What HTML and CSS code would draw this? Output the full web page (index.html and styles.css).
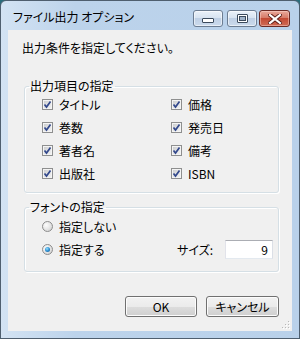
FILE: index.html
```html
<!DOCTYPE html>
<html lang="ja">
<head>
    <meta charset="UTF-8">
    <title>ファイル出力 オプション</title>
    <link rel="stylesheet" href="styles.css">
</head>
<body>
    <div class="window">
        <div class="titlebar">
            <span class="title">ファイル出力 オプション</span>
            <div class="caption-buttons">
                <span class="cap-btn cap-min">
                    <svg width="12" height="6" viewBox="0 0 12 6"><rect x="0.5" y="1.5" width="11" height="4" rx="0.5" fill="#fff" stroke="#3b4a5c"/></svg>
                </span>
                <span class="cap-btn cap-max">
                    <svg width="11" height="9" viewBox="0 0 11 9"><rect x="0.5" y="0.5" width="10" height="8" rx="0.5" fill="#fff" stroke="#3b4a5c"/><rect x="2.5" y="2.5" width="6" height="4" fill="#9fb2c8" stroke="#3b4a5c"/></svg>
                </span>
                <span class="cap-btn cap-close">
                    <svg width="14" height="10" viewBox="0 0 14 10"><path d="M2 1 L12 9 M12 1 L2 9" stroke="#5a1d17" stroke-width="4" stroke-linecap="square"/><path d="M2 1 L12 9 M12 1 L2 9" stroke="#fff" stroke-width="2.2" stroke-linecap="square"/></svg>
                </span>
            </div>
        </div>

        <div class="client">
            <p class="prompt">出力条件を指定してください。</p>

            <!-- 出力項目 -->
            <fieldset class="group group-items">
                <legend>出力項目の指定</legend>
                <div class="check-grid">
                    <div class="check"><span class="box"><svg width="9" height="9" viewBox="0 0 9 9"><path d="M1.5 4.5 L3.5 7 L7.5 1.5" fill="none" stroke="#32488c" stroke-width="1.7"/></svg></span>タイトル</div>
                    <div class="check"><span class="box"><svg width="9" height="9" viewBox="0 0 9 9"><path d="M1.5 4.5 L3.5 7 L7.5 1.5" fill="none" stroke="#32488c" stroke-width="1.7"/></svg></span>価格</div>
                    <div class="check"><span class="box"><svg width="9" height="9" viewBox="0 0 9 9"><path d="M1.5 4.5 L3.5 7 L7.5 1.5" fill="none" stroke="#32488c" stroke-width="1.7"/></svg></span>巻数</div>
                    <div class="check"><span class="box"><svg width="9" height="9" viewBox="0 0 9 9"><path d="M1.5 4.5 L3.5 7 L7.5 1.5" fill="none" stroke="#32488c" stroke-width="1.7"/></svg></span>発売日</div>
                    <div class="check"><span class="box"><svg width="9" height="9" viewBox="0 0 9 9"><path d="M1.5 4.5 L3.5 7 L7.5 1.5" fill="none" stroke="#32488c" stroke-width="1.7"/></svg></span>著者名</div>
                    <div class="check"><span class="box"><svg width="9" height="9" viewBox="0 0 9 9"><path d="M1.5 4.5 L3.5 7 L7.5 1.5" fill="none" stroke="#32488c" stroke-width="1.7"/></svg></span>備考</div>
                    <div class="check"><span class="box"><svg width="9" height="9" viewBox="0 0 9 9"><path d="M1.5 4.5 L3.5 7 L7.5 1.5" fill="none" stroke="#32488c" stroke-width="1.7"/></svg></span>出版社</div>
                    <div class="check"><span class="box"><svg width="9" height="9" viewBox="0 0 9 9"><path d="M1.5 4.5 L3.5 7 L7.5 1.5" fill="none" stroke="#32488c" stroke-width="1.7"/></svg></span>ISBN</div>
                </div>
            </fieldset>

            <!-- フォント -->
            <fieldset class="group group-font">
                <legend>フォントの指定</legend>
                <div class="radio-row"><span class="radio"></span>指定しない</div>
                <div class="radio-row">
                    <span class="radio on"></span>指定する
                    <span class="size">
                        <span class="size-label">サイズ:</span>
                        <span class="size-input">9</span>
                    </span>
                </div>
            </fieldset>

            <div class="buttons">
                <button class="btn btn-ok">OK</button>
                <button class="btn btn-cancel">キャンセル</button>
            </div>

            <svg class="grip" width="9" height="9" viewBox="0 0 9 9">
                <rect x="7" y="1" width="1" height="1" fill="#b8b8b8"/>
                <rect x="4" y="4" width="1" height="1" fill="#b8b8b8"/>
                <rect x="7" y="4" width="1" height="1" fill="#b8b8b8"/>
                <rect x="1" y="7" width="1" height="1" fill="#b8b8b8"/>
                <rect x="4" y="7" width="1" height="1" fill="#b8b8b8"/>
                <rect x="7" y="7" width="1" height="1" fill="#b8b8b8"/>
                <rect x="8" y="2" width="1" height="1" fill="#fff"/>
                <rect x="5" y="5" width="1" height="1" fill="#fff"/>
                <rect x="8" y="5" width="1" height="1" fill="#fff"/>
                <rect x="2" y="8" width="1" height="1" fill="#fff"/>
                <rect x="5" y="8" width="1" height="1" fill="#fff"/>
                <rect x="8" y="8" width="1" height="1" fill="#fff"/>
            </svg>
        </div>
    </div>
</body>
</html>
```

FILE: styles.css
```css
* {
    margin: 0;
    padding: 0;
    box-sizing: border-box;
}

body {
    font-family: "Noto Sans CJK JP", "Noto Sans", sans-serif;
    font-size: 12px;
    font-feature-settings: "palt";
    color: #000;
    background: #2b6d7c;
}

.window {
    width: 300px;
    height: 339px;
    display: flex;
    flex-direction: column;
    border: 1px solid #4f5f6f;
    border-radius: 6px 6px 0 0;
    background: linear-gradient(to right, #d3e3f3 0%, #bcd3eb 25%, #b9d1ea 100%);
    padding: 0 7px 7px;
}

/* title bar */
.titlebar {
    height: 29px;
    display: flex;
    justify-content: space-between;
    align-items: flex-start;
    margin: 0 -7px;
    padding: 0 9px 0 12px;
}

.title {
    padding-top: 8px;
    line-height: 16px;
    font-size: 12px;
}

.caption-buttons {
    display: flex;
    margin-top: 9px;
}

.cap-btn {
    height: 17px;
    width: 30px;
    display: flex;
    align-items: center;
    justify-content: center;
    border: 1px solid #6c7d92;
    border-radius: 3px;
    background: linear-gradient(#eaf1f9 0%, #d8e4f1 45%, #bfd0e5 50%, #cbdaec 100%);
    box-shadow: inset 0 0 0 1px rgba(255,255,255,0.55);
}

.cap-min svg {
    margin-top: 3px;
}

.cap-max {
    margin-left: 4px;
}

.cap-close {
    width: 31px;
    margin-left: 2px;
    border-color: #6b2a24;
    background: linear-gradient(#e9a99b 0%, #d77b68 45%, #c34a34 50%, #cf6b55 100%);
    box-shadow: inset 0 0 0 1px rgba(255,220,210,0.45);
}

/* client area */
.client {
    position: relative;
    flex: 1;
    background: #f0f0f0;
    padding: 10px 13px 0 16px;
}

.prompt {
    line-height: 16px;
    margin-left: -2px;
}

.group {
    border: 1px solid #d5dfe5;
    border-radius: 3px;
    box-shadow: inset 1px 1px 0 #fff, 1px 1px 0 #fff;
    padding: 0 4px 7px;
    min-width: 0;
}

.group legend {
    padding: 0 1px;
    line-height: 16px;
}

.group-items {
    margin-top: 22px;
}

.group-font {
    margin-top: 6px;
    padding-bottom: 10px;
    padding-right: 5px;
}

.check-grid {
    display: grid;
    grid-template-columns: 129px 1fr;
    grid-auto-rows: 23px;
    margin: -1px 0 0 13px;
}

.check {
    display: flex;
    align-items: center;
    gap: 6px;
}

.box {
    width: 11px;
    height: 11px;
    display: flex;
    align-items: center;
    justify-content: center;
    border: 1px solid #8e8f8f;
    background: linear-gradient(135deg, #c9cacb 0%, #e4e5e6 60%, #f4f4f4 100%);
    box-shadow: inset 0 0 0 1px #f4f4f4;
}

.radio-row {
    display: flex;
    align-items: center;
    gap: 6px;
    height: 23px;
    margin-left: 13px;
}

.radio {
    width: 11px;
    height: 11px;
    border-radius: 50%;
    border: 1px solid #8d8d8d;
    background: radial-gradient(circle at 35% 35%, #fdfdfd 0%, #e6e6e6 50%, #c9c9c9 100%);
    display: flex;
    align-items: center;
    justify-content: center;
}

.radio.on::after {
    content: "";
    width: 5px;
    height: 5px;
    border-radius: 50%;
    background: radial-gradient(circle at 40% 35%, #9be2ff 0%, #2b8fd2 50%, #10508c 100%);
}

.size {
    margin-left: auto;
    display: flex;
    align-items: center;
    gap: 12px;
}

.size-input {
    width: 48px;
    height: 19px;
    border: 1px solid;
    border-color: #abadb3 #dbdfe6 #e3e9ef #e2e3ea;
    background: #fff;
    text-align: right;
    padding-right: 4px;
    line-height: 17px;
}

/* dialog buttons */
.buttons {
    display: flex;
    justify-content: flex-end;
    gap: 9px;
    margin-top: 24px;
}

.btn {
    height: 21px;
    font: inherit;
    color: #000;
    border: 1px solid #707070;
    border-radius: 3px;
    background: linear-gradient(#f2f2f2 0%, #ebebeb 50%, #dddddd 50%, #cfcfcf 100%);
    box-shadow: inset 0 0 0 1px #fcfcfc;
}

.btn-ok {
    width: 72px;
}

.btn-cancel {
    width: 73px;
}

.grip {
    position: absolute;
    right: 2px;
    bottom: 2px;
}
```
